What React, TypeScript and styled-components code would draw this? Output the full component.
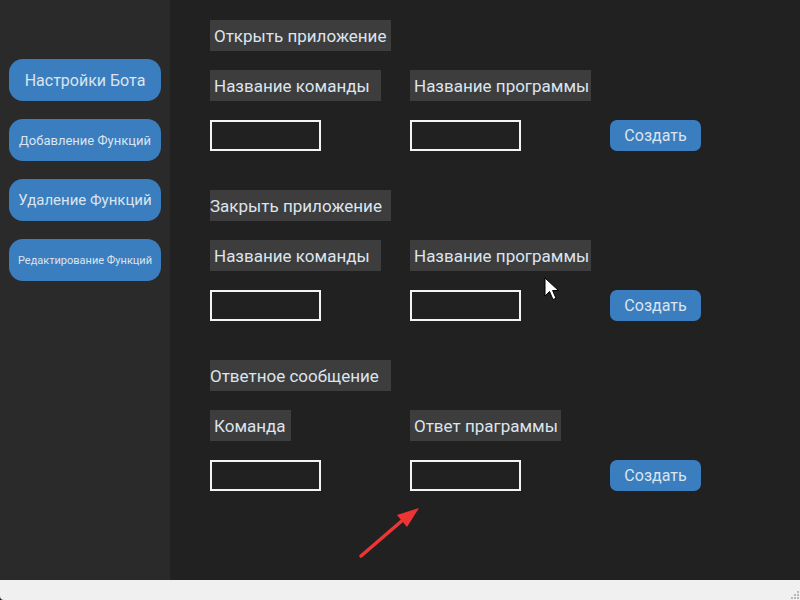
import React from "react";
import styled, { createGlobalStyle } from "styled-components";

const GlobalStyle = createGlobalStyle`
  html, body { margin: 0; padding: 0; background: #212121; overflow: hidden; }
  * { box-sizing: border-box; }
`;

const Window = styled.div`
  position: relative;
  width: 800px;
  height: 600px;
  display: flex;
  flex-direction: column;
  font-family: Roboto, "Noto Sans", sans-serif;
  color: #dce4ee;
`;

const Body = styled.div`
  flex: 1;
  display: flex;
  min-height: 0;
`;

const Sidebar = styled.nav`
  width: 170px;
  background: #2a2a2a;
  padding: 59px 0 0 9px;
  display: flex;
  flex-direction: column;
  gap: 18px;
`;

const NavButton = styled.button<{ $size: number }>`
  width: 152px;
  height: 42px;
  border: none;
  border-radius: 14px;
  background: #3a7ebf;
  color: #dce4ee;
  font-family: Roboto, "Noto Sans", sans-serif;
  font-size: ${(p) => p.$size}px;
  padding: 0;
  white-space: nowrap;
  display: flex;
  align-items: center;
  justify-content: center;
`;

const Content = styled.main`
  flex: 1;
  background: #212121;
  padding: 20px 0 0 40px;
  display: flex;
  flex-direction: column;
  gap: 39px;
`;

const Section = styled.section`
  display: grid;
  grid-template-columns: 200px 200px 91px;
  grid-auto-rows: 31px;
  row-gap: 19px;
`;

const Label = styled.div<{ $w: number; $pl: number }>`
  width: ${(p) => p.$w}px;
  height: 31px;
  background: #3d3d3d;
  display: flex;
  align-items: center;
  padding-left: ${(p) => p.$pl}px;
  font-size: 17px;
  white-space: nowrap;
  overflow: hidden;
`;

const HeaderRow = styled.div`
  grid-column: 1 / -1;
`;

const Input = styled.input`
  width: 111px;
  height: 31px;
  border: 2px solid #f4f4f4;
  background: transparent;
  color: #dce4ee;
  outline: none;
  padding: 0 4px;
`;

const CreateButton = styled.button`
  width: 91px;
  height: 31px;
  border: none;
  border-radius: 7px;
  background: #3a7ebf;
  color: #dce4ee;
  font-family: Roboto, "Noto Sans", sans-serif;
  font-size: 16px;
  padding: 0;
`;

const StatusBar = styled.div`
  height: 20px;
  background: #f0f0f0;
  position: relative;
  border-bottom-left-radius: 4px;
`;

const Grip = styled.svg`
  position: absolute;
  right: 0;
  bottom: 0;
`;

const Overlay = styled.svg`
  position: absolute;
  left: 0;
  top: 0;
  pointer-events: none;
`;

type Sec = {
  title: string;
  titlePl: number;
  a: { text: string; w: number; pl: number };
  b: { text: string; w: number; pl: number };
};

const sections: Sec[] = [
  {
    title: "Открыть приложение",
    titlePl: 4,
    a: { text: "Название команды", w: 171, pl: 4 },
    b: { text: "Название программы", w: 181, pl: 4 },
  },
  {
    title: "Закрыть приложение",
    titlePl: 0,
    a: { text: "Название команды", w: 171, pl: 4 },
    b: { text: "Название программы", w: 181, pl: 4 },
  },
  {
    title: "Ответное сообщение",
    titlePl: 0,
    a: { text: "Команда", w: 81, pl: 4 },
    b: { text: "Ответ праграммы", w: 151, pl: 4 },
  },
];

const navItems = [
  { text: "Настройки Бота", size: 16 },
  { text: "Добавление Функций", size: 13 },
  { text: "Удаление Функций", size: 15 },
  { text: "Редактирование Функций", size: 11 },
];

export default function App() {
  return (
    <>
      <GlobalStyle />
      <Window>
        <Body>
          <Sidebar>
            {navItems.map((n) => (
              <NavButton key={n.text} $size={n.size}>
                {n.text}
              </NavButton>
            ))}
          </Sidebar>
          <Content>
            {sections.map((s) => (
              <Section key={s.title}>
                <HeaderRow>
                  <Label $w={181} $pl={s.titlePl}>
                    {s.title}
                  </Label>
                </HeaderRow>
                <Label $w={s.a.w} $pl={s.a.pl}>
                  {s.a.text}
                </Label>
                <Label $w={s.b.w} $pl={s.b.pl}>
                  {s.b.text}
                </Label>
                <div />
                <Input />
                <Input />
                <CreateButton>Создать</CreateButton>
              </Section>
            ))}
          </Content>
        </Body>
        <StatusBar>
          <Grip width="12" height="12" viewBox="0 0 12 12">
            {[
              [9, 3],
              [6, 6],
              [9, 6],
              [3, 9],
              [6, 9],
              [9, 9],
            ].map(([x, y]) => (
              <rect key={`${x}-${y}`} x={x} y={y} width="2" height="2" fill="#b8b8b8" />
            ))}
          </Grip>
        </StatusBar>
        <Overlay width="800" height="600" viewBox="0 0 800 600">
          <line x1="361" y1="556" x2="404" y2="519" stroke="#ee3535" strokeWidth="3.5" strokeLinecap="round" />
          <polygon points="419,508 397,515 407,527" fill="#ee3535" />
          <path
            d="M545 278 L545 296 L549.5 291.5 L553 299.5 L556 298.3 L552.6 290.5 L558.5 290.5 Z"
            fill="#ffffff"
            stroke="#000000"
            strokeWidth="1"
            strokeLinejoin="miter"
          />
        </Overlay>
      </Window>
    </>
  );
}
